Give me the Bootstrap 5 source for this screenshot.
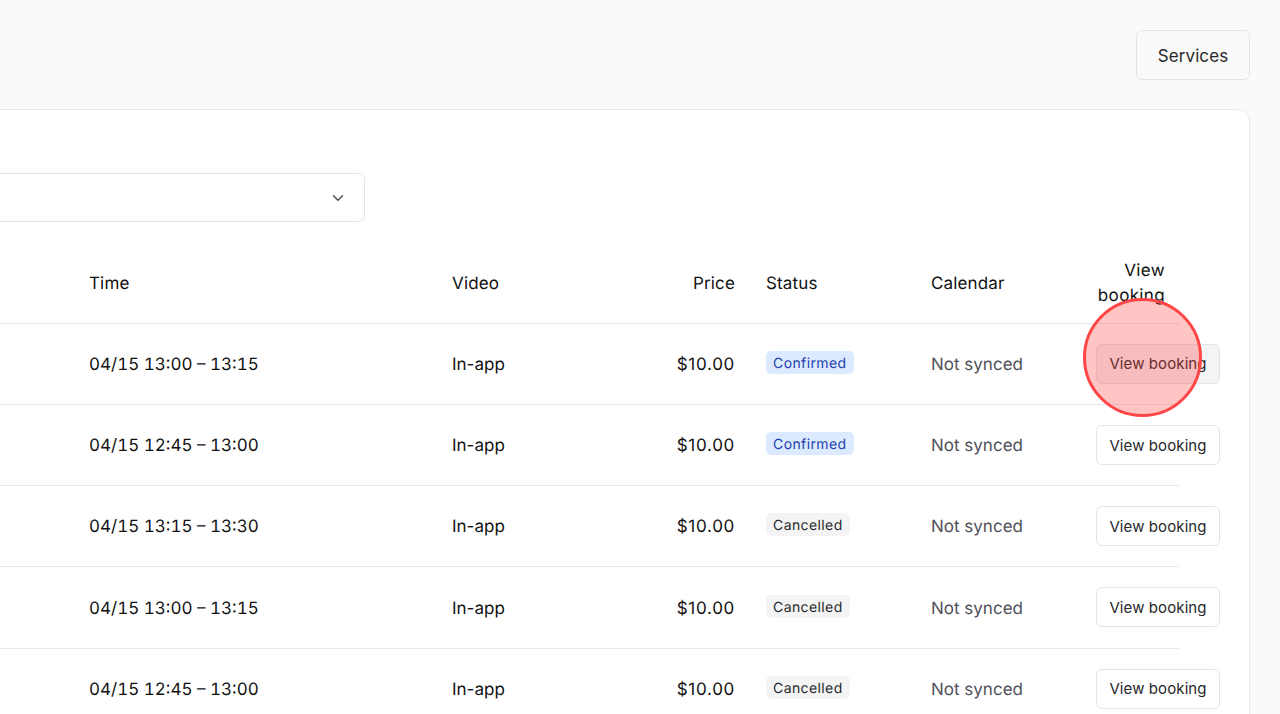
<!doctype html>
<html lang="en">

<head>
    <meta charset="utf-8">
    <meta name="viewport" content="width=device-width, initial-scale=1">
    <title>Bookings</title>
    <link href="https://cdn.jsdelivr.net/npm/bootstrap@5.3.5/dist/css/bootstrap.min.css" rel="stylesheet">
    <style>
        html, body {
            height: 714px;
            overflow: hidden;
        }

        body {
            background-color: #fafafa;
            font-family: Inter, "Liberation Sans", sans-serif;
            font-size: 17px;
            color: #18181b;
            position: relative;
            text-rendering: geometricPrecision;
        }

        .top-row {
            padding: 30px 30px 29px 0;
        }

        .services-btn {
            width: 114px;
            height: 50px;
            padding: 3px 0 0;
            font-size: 17px;
            letter-spacing: .1px;
            color: #27272a;
            border: 1px solid #e4e4e7;
            border-radius: 6px;
            background: transparent;
        }

        .main-panel {
            margin: 0 30px 0 -60px;
            height: 640px;
            padding: 63px 0 0 0;
            background: #fff;
            border: 1px solid #e8e8ea;
            border-radius: 12px;
        }

        .filter-select {
            --bs-form-select-bg-img: url("data:image/svg+xml,%3csvg xmlns='http://www.w3.org/2000/svg' viewBox='0 0 16 16'%3e%3cpath fill='none' stroke='%2352525b' stroke-linecap='round' stroke-linejoin='round' stroke-width='2' d='m2 5 6 6 6-6'/%3e%3c/svg%3e");
            width: 424px;
            height: 49px;
            border-color: #e4e4e7;
            border-radius: 6px;
            background-position: right 18px center;
            margin-bottom: 21px;
        }

        .booking-table {
            table-layout: fixed;
            width: 1238px;
            margin: 0;
            font-size: 17px;
        }

        .booking-table th, .booking-table td {
            vertical-align: middle;
            padding: 0 14px;
            border-color: #e8e8ea;
            color: #111;
        }

        .booking-table th {
            font-weight: 400;
            height: 80px;
            line-height: 25px;
            letter-spacing: .15px;
        }

        .booking-table th:not(:last-child) {
            padding-top: 4px;
        }

        .booking-table th:last-child {
            padding-top: 2px;
            letter-spacing: .35px;
        }

        .booking-table td.text-cell {
            padding-top: 4px;
        }

        .booking-table td.time-cell {
            font-variant-numeric: tabular-nums;
        }

        .booking-table td.amount-cell {
            letter-spacing: .7px;
        }

        .booking-table tbody tr {
            height: 81.25px;
        }

        .booking-table td.muted-cell {
            color: #52525b;
        }

        .booking-table .price-cell {
            padding-right: 17px;
        }

        .col-lead { width: 134px; }
        .col-time { width: 363px; }
        .col-video { width: 140px; }
        .col-price { width: 174px; }
        .col-status { width: 165px; }
        .col-calendar { width: 165px; }
        .col-action { width: 97px; }

        .state-tag {
            display: inline-block;
            padding: 2px 7px 0;
            line-height: 21px;
            font-size: 14px;
            letter-spacing: .4px;
            border-radius: 5px;
        }

        .state-ok {
            background: #dbeafe;
            color: #1e40af;
        }

        .state-off {
            background: #f4f4f5;
            color: #27272a;
        }

        .booking-btn {
            width: 124px;
            height: 40px;
            padding: 2px 0 0;
            font-size: 15px;
            letter-spacing: .1px;
            color: #27272a;
            background: #fff;
            border: 1px solid #e4e4e7;
            border-radius: 6px;
            white-space: nowrap;
        }

        .booking-btn.is-hover {
            background: #f4f4f5;
        }

        .click-ring {
            position: absolute;
            left: 1083px;
            top: 298px;
            width: 119px;
            height: 119px;
            border-radius: 50%;
            border: 3px solid #ff4646;
            background: rgba(255, 59, 59, .3);
        }
    </style>
</head>

<body>
    <div class="top-row d-flex justify-content-end">
        <button type="button" class="btn services-btn">Services</button>
    </div>

    <div class="main-panel">
        <select class="form-select filter-select" aria-label="Filter">
            <option></option>
        </select>

        <table class="table booking-table">
            <colgroup>
                <col class="col-lead">
                <col class="col-time">
                <col class="col-video">
                <col class="col-price">
                <col class="col-status">
                <col class="col-calendar">
                <col class="col-action">
            </colgroup>
            <thead>
                <tr>
                    <th></th>
                    <th>Time</th>
                    <th>Video</th>
                    <th class="text-end price-cell">Price</th>
                    <th>Status</th>
                    <th>Calendar</th>
                    <th class="text-end">View booking</th>
                </tr>
            </thead>
            <tbody id="rows"></tbody>
        </table>
    </div>

    <div class="click-ring"></div>

    <script>
        const bookings = [
            ['04/15 13:00 – 13:15', 'Confirmed'],
            ['04/15 12:45 – 13:00', 'Confirmed'],
            ['04/15 13:15 – 13:30', 'Cancelled'],
            ['04/15 13:00 – 13:15', 'Cancelled'],
            ['04/15 12:45 – 13:00', 'Cancelled']
        ];

        document.getElementById('rows').innerHTML = bookings.map(function(b, i) {
            const tag = b[1] === 'Confirmed' ? 'state-ok' : 'state-off';
            const hover = i === 0 ? ' is-hover' : '';
            return '<tr><td></td><td class="text-cell time-cell">' + b[0] + '</td><td class="text-cell">In-app</td>' +
                '<td class="text-end price-cell text-cell amount-cell">$10.00</td>' +
                '<td><span class="state-tag ' + tag + '">' + b[1] + '</span></td>' +
                '<td class="muted-cell text-cell">Not synced</td>' +
                '<td><button type="button" class="btn booking-btn' + hover + '">View booking</button></td></tr>';
        }).join('');
    </script>

    <script src="https://cdn.jsdelivr.net/npm/bootstrap@5.3.5/dist/js/bootstrap.bundle.min.js"></script>
</body>

</html>
